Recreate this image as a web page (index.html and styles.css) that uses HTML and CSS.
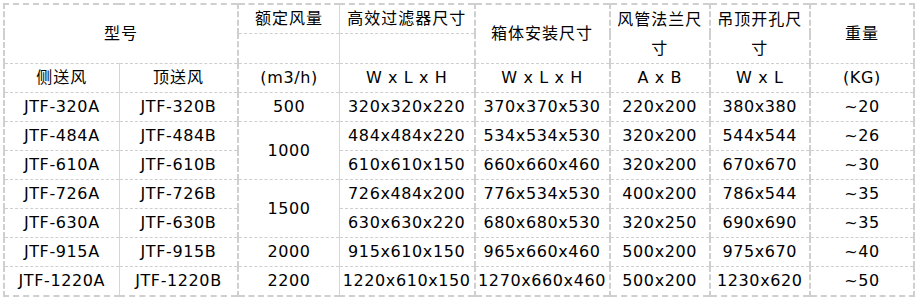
FILE: index.html
```html
<!DOCTYPE html>
<html lang="zh-CN">
<head>
  <meta charset="UTF-8" />
  <title>JTF 高效送风口规格</title>
  <link rel="stylesheet" href="styles.css">
</head>
<body>
  <table class="spec">
    <colgroup>
      <col class="c-side">
      <col class="c-top">
      <col class="c-flow">
      <col class="c-filter">
      <col class="c-box">
      <col class="c-duct">
      <col class="c-hole">
      <col class="c-weight">
    </colgroup>
    <tr class="h1">
      <td colspan="2" rowspan="2" class="zh">型号</td>
      <td class="zh">额定风量</td>
      <td class="zh">高效过滤器尺寸</td>
      <td rowspan="2" class="zh">箱体安装尺寸</td>
      <td rowspan="2" class="zh wrap">风管法兰尺寸</td>
      <td rowspan="2" class="zh wrap">吊顶开孔尺寸</td>
      <td rowspan="2" class="zh">重量</td>
    </tr>
    <tr class="h2">
      <td></td>
      <td></td>
    </tr>
    <tr>
      <td class="zh">侧送风</td>
      <td class="zh">顶送风</td>
      <td>(m3/h)</td>
      <td>W x L x H</td>
      <td>W x L x H</td>
      <td>A x B</td>
      <td>W x L</td>
      <td>(KG)</td>
    </tr>
    <tr>
      <td>JTF-320A</td><td>JTF-320B</td><td>500</td>
      <td>320x320x220</td><td>370x370x530</td><td>220x200</td><td>380x380</td><td>~20</td>
    </tr>
    <tr>
      <td>JTF-484A</td><td>JTF-484B</td><td rowspan="2">1000</td>
      <td>484x484x220</td><td>534x534x530</td><td>320x200</td><td>544x544</td><td>~26</td>
    </tr>
    <tr>
      <td>JTF-610A</td><td>JTF-610B</td>
      <td>610x610x150</td><td>660x660x460</td><td>320x200</td><td>670x670</td><td>~30</td>
    </tr>
    <tr>
      <td>JTF-726A</td><td>JTF-726B</td><td rowspan="2">1500</td>
      <td>726x484x200</td><td>776x534x530</td><td>400x200</td><td>786x544</td><td>~35</td>
    </tr>
    <tr>
      <td>JTF-630A</td><td>JTF-630B</td>
      <td>630x630x220</td><td>680x680x530</td><td>320x250</td><td>690x690</td><td>~35</td>
    </tr>
    <tr>
      <td>JTF-915A</td><td>JTF-915B</td><td>2000</td>
      <td>915x610x150</td><td>965x660x460</td><td>500x200</td><td>975x670</td><td>~40</td>
    </tr>
    <tr>
      <td>JTF-1220A</td><td>JTF-1220B</td><td>2200</td>
      <td>1220x610x150</td><td>1270x660x460</td><td>500x200</td><td>1230x620</td><td>~50</td>
    </tr>
  </table>
</body>
</html>
```
FILE: styles.css
```css
body { margin: 0; background: #fff; }
.spec {
  margin: 3px;
  width: 912px;
  table-layout: fixed;
  border-collapse: collapse;
  border: 2px dashed #cfcfcf;
  font-family: "DejaVu Sans", Verdana, "Noto Sans CJK SC", sans-serif;
  font-size: 16px;
  letter-spacing: 0.6px;
  color: #000;
}
.spec td {
  border: 1px dashed #cfcfcf;
  padding: 0 2px;
  height: 28px;
  line-height: 28px;
  text-align: center;
  vertical-align: middle;
  white-space: nowrap;
}
.spec td.zh { letter-spacing: 1px; }
.spec td.wrap { white-space: normal; line-height: 29px; padding: 0 4px; }
.spec .h1 td { height: 26px; }
.spec .h2 td { height: 29px; }

.c-side { width: 115px; }
.c-top { width: 119px; border-left: 1px solid #d6d6d6; }
.c-flow { width: 101px; border-left: 2px dashed #cfcfcf; }
.c-filter { width: 135px; border-left: 1px solid #d6d6d6; }
.c-box { width: 135px; border-left: 2px dashed #cfcfcf; }
.c-duct { width: 100px; border-left: 2px dashed #cfcfcf; }
.c-hole { width: 100px; border-left: 2px dashed #cfcfcf; }
.c-weight { width: 104px; border-left: 2px dashed #cfcfcf; }
```
